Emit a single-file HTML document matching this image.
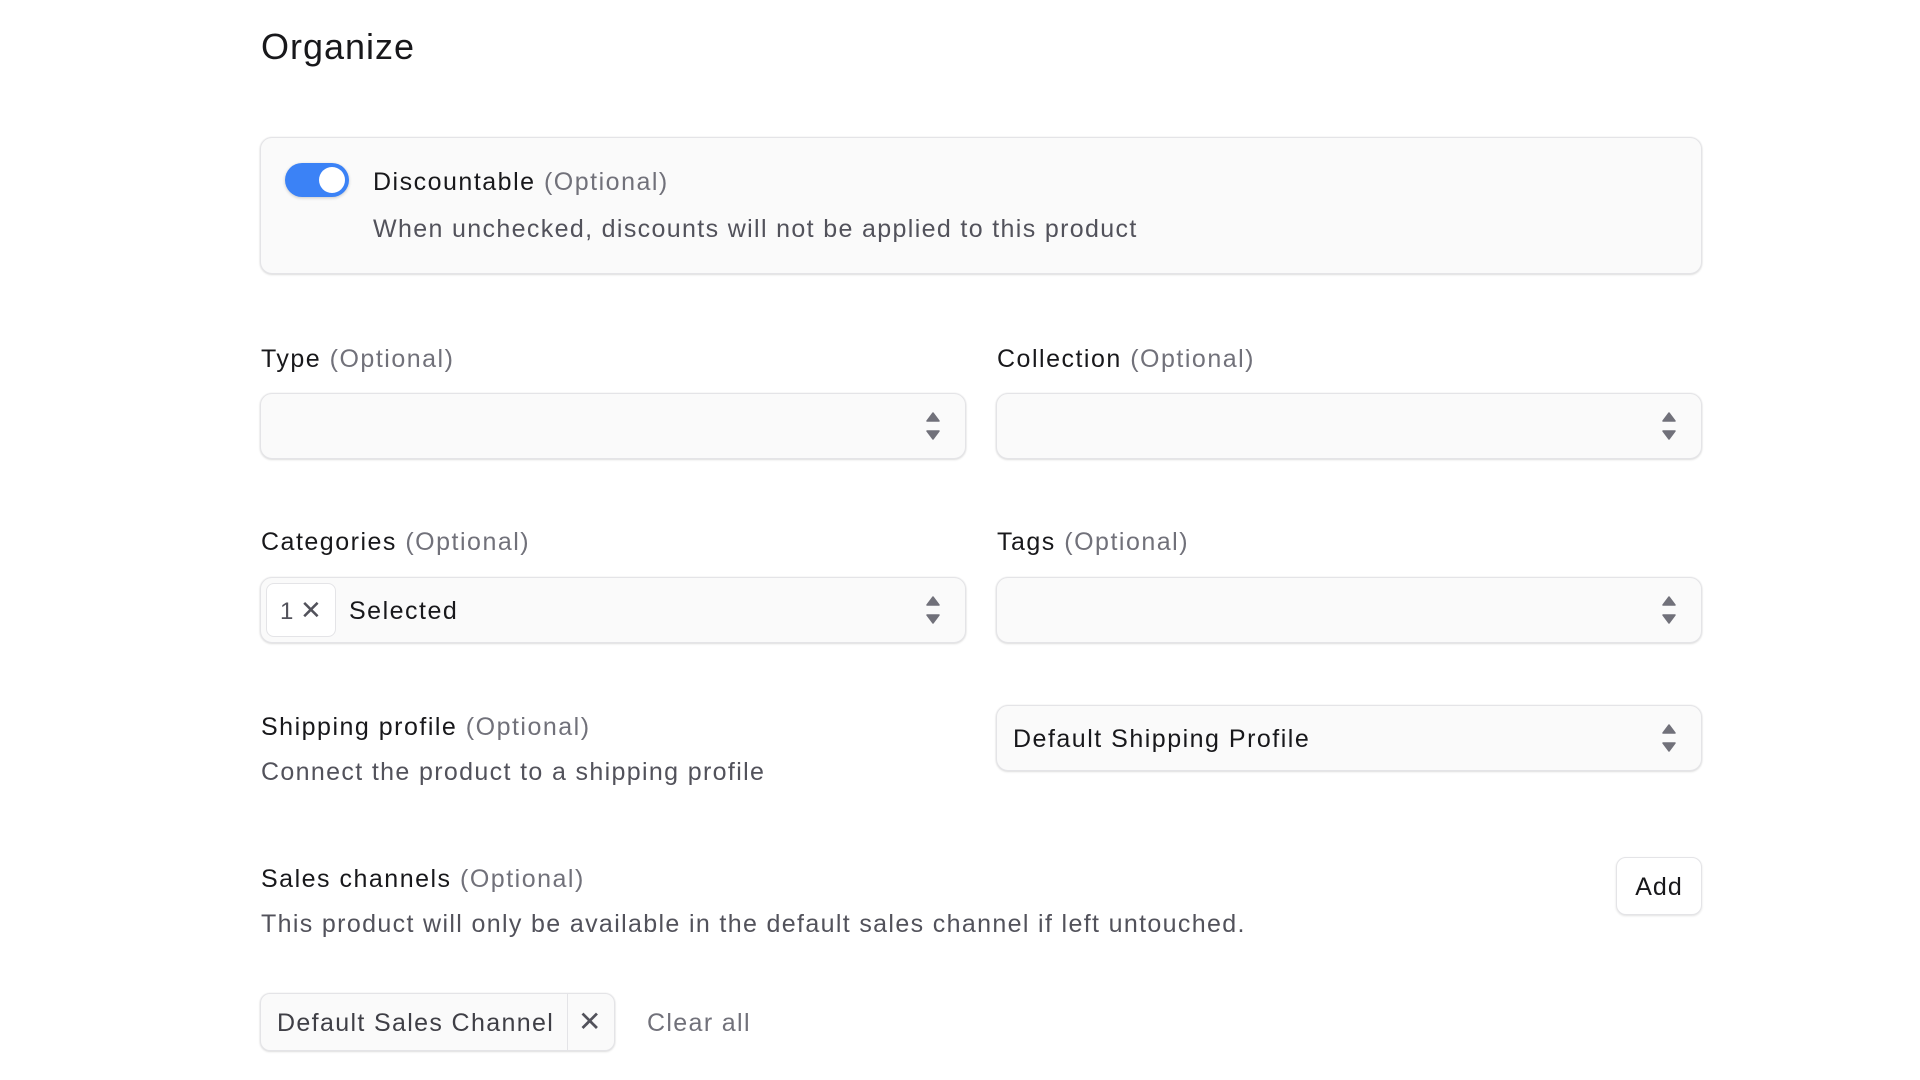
<!DOCTYPE html>
<html><head><style>
*{box-sizing:border-box;margin:0;padding:0}
body{width:1920px;height:1080px;background:#fff;font-family:"Liberation Sans",sans-serif;color:#18181b;position:relative;overflow:hidden}
.a{position:absolute;white-space:nowrap}
.t{font-size:25px;line-height:30px;letter-spacing:1.5px}
.o{color:#71717a}
.d{color:#52525b;font-size:25px;line-height:30px;letter-spacing:1.35px}
.box{position:absolute;background:#fafafa;border:1px solid #e4e4e7;border-radius:12px;box-shadow:0 1px 2px rgba(0,0,0,.12),0 0 0 1px rgba(0,0,0,.02)}
.chev{position:absolute;width:16px;height:30px}
</style></head><body>
<div class="a" style="left:261px;top:25px;font-size:36px;line-height:44px;letter-spacing:1px;color:#18181b">Organize</div>

<div class="box" style="left:260px;top:137px;width:1442px;height:137px"></div>
<div class="a" style="left:285px;top:163px;width:64px;height:34px;border-radius:17px;background:#3b82f6;box-shadow:0 1px 3px rgba(0,0,0,.2)"><div style="position:absolute;right:4px;top:4px;width:26px;height:26px;border-radius:50%;background:#fff"></div></div>
<div class="a t" style="left:373px;top:167px">Discountable <span class="o">(Optional)</span></div>
<div class="a d" style="left:373px;top:214px">When unchecked, discounts will not be applied to this product</div>

<div class="a t" style="left:261px;top:344px">Type <span class="o">(Optional)</span></div>
<div class="a t" style="left:997px;top:344px">Collection <span class="o">(Optional)</span></div>
<div class="box" style="left:260px;top:393px;width:706px;height:66px"></div>
<div class="box" style="left:996px;top:393px;width:706px;height:66px"></div>

<div class="a t" style="left:261px;top:527px">Categories <span class="o">(Optional)</span></div>
<div class="a t" style="left:997px;top:527px">Tags <span class="o">(Optional)</span></div>
<div class="box" style="left:260px;top:577px;width:706px;height:66px"></div>
<div class="box" style="left:996px;top:577px;width:706px;height:66px"></div>
<div class="a" style="left:266px;top:583px;width:70px;height:54px;border:1px solid #e4e4e7;border-radius:8px;background:#fff;font-size:24px;line-height:52px;color:#52525b;padding-left:13px">1 <span style="font-size:26px">✕</span></div>
<div class="a t" style="left:349px;top:596px">Selected</div>

<div class="a t" style="left:261px;top:712px">Shipping profile <span class="o">(Optional)</span></div>
<div class="a d" style="left:261px;top:757px">Connect the product to a shipping profile</div>
<div class="box" style="left:996px;top:705px;width:706px;height:66px"></div>
<div class="a t" style="left:1013px;top:724px">Default Shipping Profile</div>

<div class="a t" style="left:261px;top:864px">Sales channels <span class="o">(Optional)</span></div>
<div class="a d" style="left:261px;top:909px">This product will only be available in the default sales channel if left untouched.</div>
<div class="a" style="left:1616px;top:857px;width:86px;height:58px;border-radius:10px;background:#fff;border:1px solid #e4e4e7;box-shadow:0 1px 2px rgba(0,0,0,.12);font-size:25px;line-height:58px;letter-spacing:1px;text-align:center">Add</div>

<div class="box" style="left:260px;top:993px;width:355px;height:58px;border-radius:10px"></div>
<div class="a" style="left:567px;top:994px;width:1px;height:56px;background:#e4e4e7"></div>
<div class="a d" style="left:277px;top:1008px;color:#3f3f46">Default Sales Channel</div>
<div class="a" style="left:578px;top:1007px;font-size:28px;line-height:30px;color:#52525b">✕</div>
<div class="a d" style="left:647px;top:1008px;color:#71717a">Clear all</div>

<svg class="chev" style="left:925px;top:411px" viewBox="0 0 16 30"><path d="M8 2 L14 10 H2 Z M8 28 L14 20 H2 Z" fill="#71717a" stroke="#71717a" stroke-width="1.5" stroke-linejoin="round"/></svg>
<svg class="chev" style="left:1661px;top:411px" viewBox="0 0 16 30"><path d="M8 2 L14 10 H2 Z M8 28 L14 20 H2 Z" fill="#71717a" stroke="#71717a" stroke-width="1.5" stroke-linejoin="round"/></svg>
<svg class="chev" style="left:925px;top:595px" viewBox="0 0 16 30"><path d="M8 2 L14 10 H2 Z M8 28 L14 20 H2 Z" fill="#71717a" stroke="#71717a" stroke-width="1.5" stroke-linejoin="round"/></svg>
<svg class="chev" style="left:1661px;top:595px" viewBox="0 0 16 30"><path d="M8 2 L14 10 H2 Z M8 28 L14 20 H2 Z" fill="#71717a" stroke="#71717a" stroke-width="1.5" stroke-linejoin="round"/></svg>
<svg class="chev" style="left:1661px;top:723px" viewBox="0 0 16 30"><path d="M8 2 L14 10 H2 Z M8 28 L14 20 H2 Z" fill="#71717a" stroke="#71717a" stroke-width="1.5" stroke-linejoin="round"/></svg>
</body></html>
